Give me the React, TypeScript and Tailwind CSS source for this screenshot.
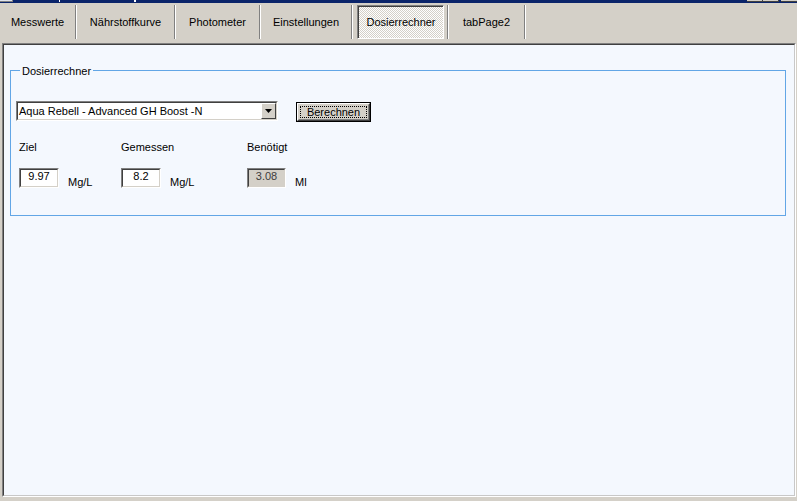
import React from 'react';

const font = "font-['Liberation_Sans',Arial,sans-serif]";

function Sep() {
  return <div className="mt-[2px] h-[34px] w-[2px] border-l border-r border-l-[#808080] border-r-white" />;
}

function Tab({ label, w }: { label: string; w: string }) {
  return (
    <div className={`mt-[2px] h-[34px] ${w} text-center leading-[34px] text-black`}>{label}</div>
  );
}

function Sunken({
  w,
  gray,
  children,
}: {
  w: string;
  gray?: boolean;
  children?: React.ReactNode;
}) {
  return (
    <div className={`h-[20px] ${w} border border-t-[#808080] border-l-[#808080] border-r-white border-b-white`}>
      <div
        className={`h-full border border-t-[#404040] border-l-[#404040] border-r-[#d4d0c8] border-b-[#d4d0c8] ${
          gray ? 'bg-[#d4d0c8] text-[#3c3c3c]' : 'bg-white text-black'
        }`}
      >
        {children}
      </div>
    </div>
  );
}

function Field({
  label,
  value,
  unit,
  col,
  box,
  gray,
}: {
  label: string;
  value: string;
  unit: string;
  col: string;
  box: string;
  gray?: boolean;
}) {
  return (
    <div className={`flex flex-col ${col}`}>
      <div className="leading-[13px]">{label}</div>
      <div className="mt-[14px] flex items-start">
        <Sunken w={box} gray={gray}>
          <div className="text-center leading-[13px]">{value}</div>
        </Sunken>
        <div className="ml-[9px] mt-[8px] leading-[13px]">{unit}</div>
      </div>
    </div>
  );
}

export default function App() {
  return (
    <div className={`flex h-[501px] w-[797px] flex-col overflow-hidden bg-[#d4d0c8] text-[11px] text-black ${font}`}>
      {/* title bar remnant */}
      <div className="flex h-[3px] items-start bg-[#0a246a]">
        <div className="h-[2px] w-[13px] border-r border-b border-[#808080] bg-[#dfe3ec]" />
        <div className="ml-[46px] h-[2px] w-[1px] bg-white" />
        <div className="ml-[74px] h-[2px] w-[2px] bg-white" />
        <div className="ml-auto h-[2px] w-[16px] border-r border-b border-[#404040] bg-[#d4d0c8]" />
        <div className="h-[2px] w-[16px] border-r border-b border-[#404040] bg-[#d4d0c8]" />
        <div className="ml-[2px] h-[2px] w-[16px] border-b border-[#404040] bg-[#d4d0c8]" />
      </div>

      {/* tabs */}
      <div className="flex h-[40px] items-start">
        <Tab label="Messwerte" w="w-[75px]" />
        <Sep />
        <Tab label="Nährstoffkurve" w="w-[97px]" />
        <Sep />
        <Tab label="Photometer" w="w-[83px]" />
        <Sep />
        <Tab label="Einstellungen" w="w-[90px]" />
        <Sep />
        <div className="ml-[4px] mt-[2px] h-[34px] w-[87px] border border-t-[#808080] border-l-[#808080] border-r-white border-b-white bg-[repeating-conic-gradient(#ffffff_0_25%,#d4d0c8_0_50%)] bg-[length:2px_2px] pl-[1px] pt-[1px] text-center leading-[30px] shadow-[inset_1px_1px_0_#404040]">
          Dosierrechner
        </div>
        <div className="w-[3px]" />
        <Sep />
        <Tab label="tabPage2" w="w-[75px]" />
        <Sep />
      </div>

      {/* page */}
      <div className="mb-[4px] ml-[2px] mr-[1px] flex-1 border border-t-[#808080] border-l-[#808080] border-r-white border-b-white">
        <div className="flex h-full flex-col border border-t-[#404040] border-l-[#404040] border-r-[#c8c8c8] border-b-[#c8c8c8] bg-[#f4f8fe]">
          <div className="ml-[6px] mr-[8px] mt-[25px] h-[146px] border border-[#62a6e6]">
            <span className="-mt-[6px] ml-[9px] block w-fit bg-[#f4f8fe] px-[2px] leading-[13px]">
              Dosierrechner
            </span>

            <div className="mt-[23px] flex items-start pl-[5px]">
              <div className="h-[20px] w-[262px] border border-t-[#808080] border-l-[#808080] border-r-white border-b-[#ffffff]">
                <div className="flex h-full border border-t-[#404040] border-l-[#404040] border-r-[#d4d0c8] border-b-[#d4d0c8] bg-white">
                  <div className="flex-1 pl-[1px] leading-[16px]">Aqua Rebell - Advanced GH Boost -N</div>
                  <div className="flex h-full w-[15px] items-center justify-center border border-t-white border-l-white border-r-[#404040] border-b-[#404040] bg-[#d4d0c8]">
                    <svg width="7" height="4" viewBox="0 0 7 4">
                      <path d="M0 0h7L3.5 4z" fill="#000" />
                    </svg>
                  </div>
                </div>
              </div>

              <div className="ml-[18px] mt-[1px] h-[20px] w-[75px] border border-black bg-[#d4d0c8]">
                <div className="h-full border border-t-white border-l-white border-r-[#404040] border-b-[#404040]">
                  <div className="h-full border border-t-[#d4d0c8] border-l-[#d4d0c8] border-r-[#808080] border-b-[#808080] p-[1px]">
                    <div className="flex h-full items-center justify-center border border-dotted border-black leading-[10px]">
                      Berechnen
                    </div>
                  </div>
                </div>
              </div>
            </div>

            <div className="mt-[19px] flex items-start pl-[8px]">
              <Field label="Ziel" value="9.97" unit="Mg/L" col="w-[102px]" box="w-[40px]" />
              <Field label="Gemessen" value="8.2" unit="Mg/L" col="w-[126px]" box="w-[40px]" />
              <Field label="Benötigt" value="3.08" unit="Ml" col="w-[100px]" box="w-[39px]" gray />
            </div>
          </div>
        </div>
      </div>
    </div>
  );
}
